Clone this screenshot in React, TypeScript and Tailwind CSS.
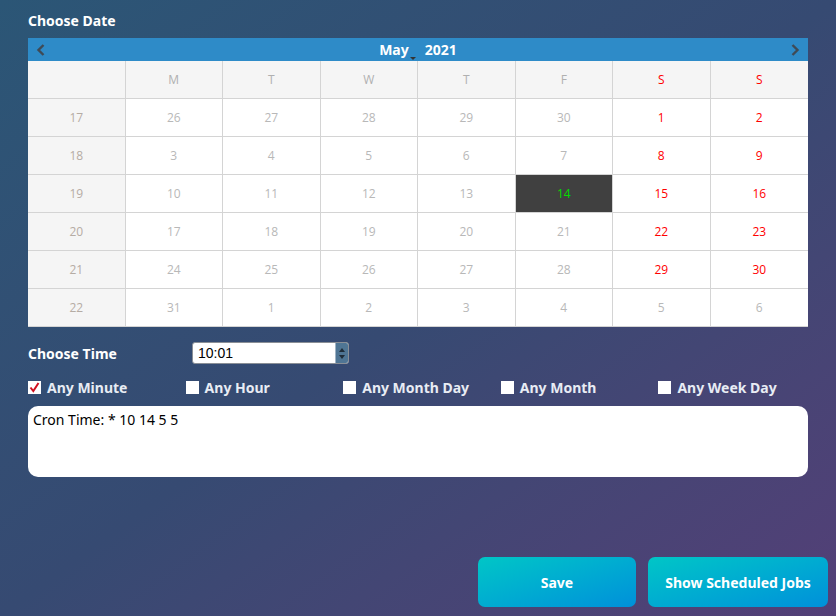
import React from 'react';

type Day = { n: number; kind: 'other' | 'cur' | 'wkd' | 'sel' };

const weeks: { wk: number; days: Day[] }[] = [
  { wk: 17, days: [26, 27, 28, 29, 30].map((n) => ({ n, kind: 'other' as const })).concat([{ n: 1, kind: 'wkd' }, { n: 2, kind: 'wkd' }]) },
  { wk: 18, days: [3, 4, 5, 6, 7].map((n) => ({ n, kind: 'cur' as const })).concat([{ n: 8, kind: 'wkd' }, { n: 9, kind: 'wkd' }]) },
  { wk: 19, days: [{ n: 10, kind: 'cur' }, { n: 11, kind: 'cur' }, { n: 12, kind: 'cur' }, { n: 13, kind: 'cur' }, { n: 14, kind: 'sel' }, { n: 15, kind: 'wkd' }, { n: 16, kind: 'wkd' }] },
  { wk: 20, days: [17, 18, 19, 20, 21].map((n) => ({ n, kind: 'cur' as const })).concat([{ n: 22, kind: 'wkd' }, { n: 23, kind: 'wkd' }]) },
  { wk: 21, days: [24, 25, 26, 27, 28].map((n) => ({ n, kind: 'cur' as const })).concat([{ n: 29, kind: 'wkd' }, { n: 30, kind: 'wkd' }]) },
  { wk: 22, days: [31, 1, 2, 3, 4, 5, 6].map((n) => ({ n, kind: 'other' as const })) },
];

const dayNames = ['M', 'T', 'W', 'T', 'F', 'S', 'S'];

const checks = [
  { label: 'Any Minute', on: true },
  { label: 'Any Hour', on: false },
  { label: 'Any Month Day', on: false },
  { label: 'Any Month', on: false },
  { label: 'Any Week Day', on: false },
];

function cellClass(kind: Day['kind']) {
  if (kind === 'sel') return 'bg-[#404040] text-[#00dd00]';
  if (kind === 'wkd') return 'bg-white text-[#ff0000]';
  return 'bg-white text-[#b8b8b8]';
}

function Chevron({ dir }: { dir: 'left' | 'right' }) {
  return (
    <svg width="10" height="14" viewBox="0 0 10 14" fill="none">
      <path
        d={dir === 'left' ? 'M7.5 2 L2.5 7 L7.5 12' : 'M2.5 2 L7.5 7 L2.5 12'}
        stroke="#3f4a55"
        strokeWidth="2.4"
      />
    </svg>
  );
}

export default function App() {
  return (
    <div
      className="w-[836px] h-[616px] overflow-hidden bg-gradient-to-br from-[#2b5676] via-[#364a72] to-[#533f77] px-[28px] text-white"
      style={{ fontFamily: '"Noto Sans", "Open Sans", sans-serif' }}
    >
      {/* Choose Date */}
      <div className="h-[38px] pt-[12px] text-[14px] leading-[18px] font-bold">Choose Date</div>

      <div className="w-[780px]">
        {/* calendar header */}
        <div className="h-[23px] bg-[#2e8bc8] flex items-center justify-between px-[8px]">
          <Chevron dir="left" />
          <div className="flex items-center text-[14px] font-bold text-white">
            <span className="relative pr-[8px]">
              May
              <span className="absolute right-[1px] bottom-[0px] w-0 h-0 border-l-[3px] border-r-[3px] border-t-[3px] border-l-transparent border-r-transparent border-t-[#333]" />
            </span>
            <span className="ml-[8px]">2021</span>
          </div>
          <Chevron dir="right" />
        </div>

        {/* grid */}
        <div
          className="grid grid-cols-8 text-[12px]"
          style={{ fontFamily: '"Open Sans", "DejaVu Sans", sans-serif' }}
        >
          <div className="h-[38px] bg-[#f5f5f5] border-r border-b border-[#d4d4d4]" />
          {dayNames.map((d, i) => (
            <div
              key={i}
              className={`h-[38px] bg-[#f5f5f5] border-b border-[#d4d4d4] flex items-center justify-center ${i < 6 ? 'border-r' : ''} ${i >= 5 ? 'text-[#ff0000]' : 'text-[#b0b0b0]'}`}
            >
              {d}
            </div>
          ))}
          {weeks.map((w) => (
            <React.Fragment key={w.wk}>
              <div className="h-[38px] bg-[#f5f5f5] border-r border-b border-[#d4d4d4] flex items-center justify-center text-[#b5aca4]">
                {w.wk}
              </div>
              {w.days.map((d, i) => (
                <div
                  key={i}
                  className={`h-[38px] border-b border-[#d4d4d4] flex items-center justify-center ${i < 6 ? 'border-r' : ''} ${cellClass(d.kind)}`}
                >
                  {d.n}
                </div>
              ))}
            </React.Fragment>
          ))}
        </div>
      </div>

      {/* Choose Time */}
      <div className="mt-[15px] h-[22px] flex items-center">
        <div className="w-[164px] text-[14px] font-bold">Choose Time</div>
        <div className="w-[157px] h-[22px] bg-white rounded-[3px] border border-[#8a8f96] flex items-center justify-between overflow-hidden">
          <span className="pl-[5px] text-[14px] text-black" style={{ fontFamily: '"Liberation Sans", Arial, sans-serif' }}>
            10:01
          </span>
          <span className="w-[13px] h-full bg-[#4f7594] flex flex-col items-center justify-center gap-[3px] border-l border-[#9fb3c4]">
            <span className="w-0 h-0 border-l-[3px] border-r-[3px] border-b-[4px] border-l-transparent border-r-transparent border-b-[#1f2d3a]" />
            <span className="w-0 h-0 border-l-[3px] border-r-[3px] border-t-[4px] border-l-transparent border-r-transparent border-t-[#1f2d3a]" />
          </span>
        </div>
      </div>

      {/* checkboxes */}
      <div className="mt-[13px] h-[16px] grid grid-cols-5 w-[788px]">
        {checks.map((c) => (
          <div key={c.label} className="flex items-center gap-[6px]">
            <span className="w-[13px] h-[13px] bg-white flex items-center justify-center">
              {c.on && (
                <svg width="11" height="11" viewBox="0 0 11 11" fill="none">
                  <path d="M1.5 5.5 L4.3 9 L9.5 1" stroke="#d01020" strokeWidth="2" />
                </svg>
              )}
            </span>
            <span className="text-[14px] font-bold text-[#e8ecf4]">{c.label}</span>
          </div>
        ))}
      </div>

      {/* cron output */}
      <div className="mt-[13px] w-[780px] h-[71px] bg-white rounded-[10px] px-[5px] pt-[4px] text-[14px] leading-[20px] text-black">
        Cron Time: * 10 14 5 5
      </div>

      {/* buttons */}
      <div className="mt-[80px] flex justify-end gap-[12px] -mr-[20px]">
        <button className="w-[158px] h-[50px] rounded-[7px] bg-gradient-to-br from-[#00c6c6] to-[#0090da] text-[14px] font-bold text-white">
          Save
        </button>
        <button className="w-[180px] h-[50px] rounded-[7px] bg-gradient-to-br from-[#00c6c6] to-[#0090da] text-[14px] font-bold text-white">
          Show Scheduled Jobs
        </button>
      </div>
    </div>
  );
}
